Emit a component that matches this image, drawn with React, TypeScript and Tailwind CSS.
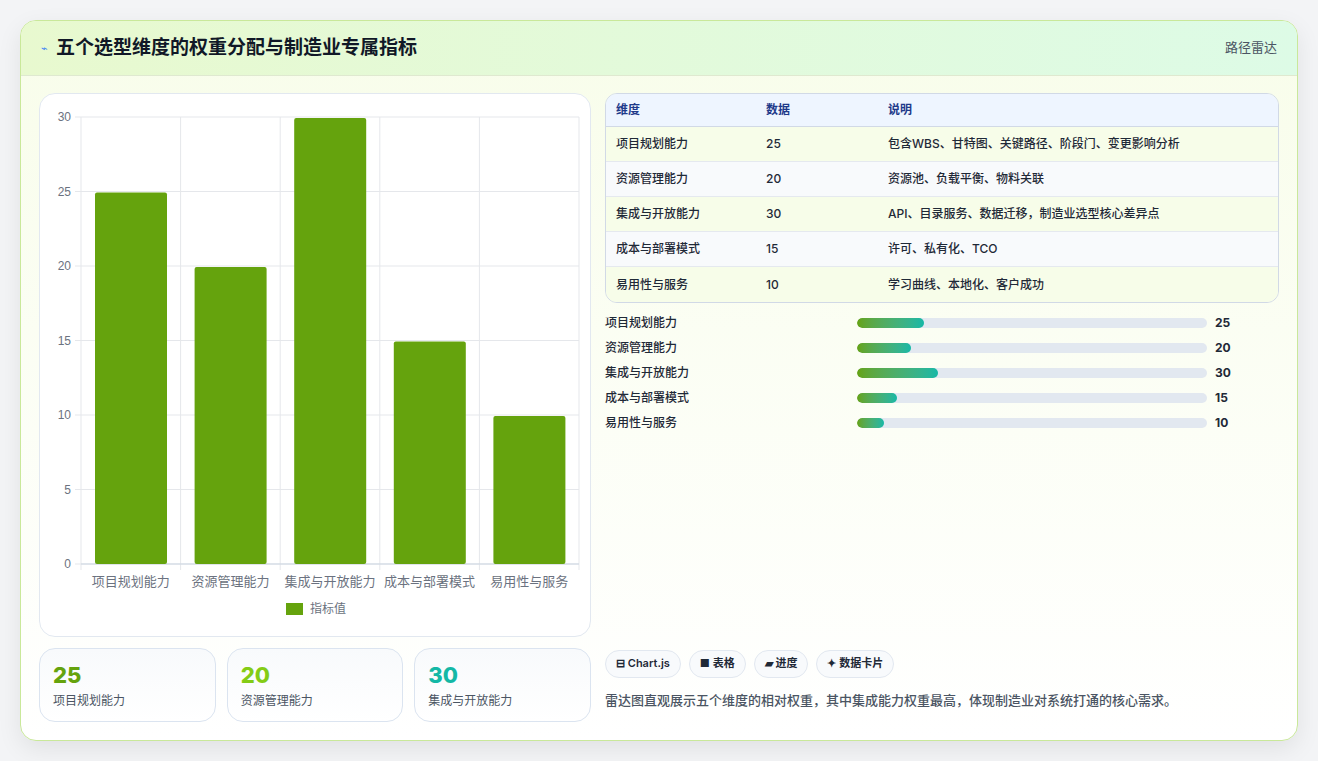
import React from "react";

const data = [
  { name: "项目规划能力", v: 25, d: "包含WBS、甘特图、关键路径、阶段门、变更影响分析" },
  { name: "资源管理能力", v: 20, d: "资源池、负载平衡、物料关联" },
  { name: "集成与开放能力", v: 30, d: "API、目录服务、数据迁移，制造业选型核心差异点" },
  { name: "成本与部署模式", v: 15, d: "许可、私有化、TCO" },
  { name: "易用性与服务", v: 10, d: "学习曲线、本地化、客户成功" },
];

function Chart() {
  // svg coords relative to card at (39,92)
  const x0 = 41, x1 = 539, yTop = 23, yBot = 470;
  const cw = (x1 - x0) / 5;
  const y = (v: number) => yBot - (v / 30) * (yBot - yTop);
  return (
    <svg width="550" height="542" className="block">
      {[0, 5, 10, 15, 20, 25, 30].map((t) => (
        <g key={t}>
          <line x1={x0 - 6} x2={x1} y1={y(t)} y2={y(t)} stroke="#e5e7eb" strokeWidth="1" />
          <text x={x0 - 10} y={y(t) + 4} textAnchor="end" fontSize="12" fill="#6b7280" fontFamily="Liberation Sans, sans-serif">{t}</text>
        </g>
      ))}
      {[0, 1, 2, 3, 4, 5].map((i) => (
        <line key={i} x1={x0 + i * cw} x2={x0 + i * cw} y1={yTop} y2={yBot + 6} stroke="#e5e7eb" />
      ))}
      <line x1={x0} x2={x1} y1={yBot} y2={yBot} stroke="#cbd5e1" />
      {data.map((d, i) => (
        <g key={d.name}>
          <rect x={x0 + i * cw + 14} y={y(d.v) + 1} width={72} height={yBot - y(d.v) - 1} rx="2" fill="#65a30d" />
          <text x={x0 + i * cw + cw / 2} y={yBot + 22} textAnchor="middle" fontSize="13" fill="#6b7280" fontFamily="Noto Sans CJK SC, sans-serif">{d.name}</text>
        </g>
      ))}
      <rect x="246" y="509" width="17" height="12" fill="#65a30d" />
      <text x="270" y="519" fontSize="12" fill="#6b7280" fontFamily="Noto Sans CJK SC, sans-serif">指标值</text>
    </svg>
  );
}

export default function App() {
  return (
    <div className="min-h-[761px] bg-[#f3f4f6] pt-5 px-5 pb-[22px]" style={{ fontFamily: "Inter, 'Noto Sans CJK SC', sans-serif" }}>
      <div className="rounded-2xl border border-[#c9e89a] bg-gradient-to-b from-[#f8fdea] to-white shadow-[0_8px_24px_rgba(0,0,0,0.08)] overflow-hidden">
        <div className="h-[55px] flex items-center justify-between px-5 bg-gradient-to-r from-[#e8f9cf] to-[#ddfbe6] border-b border-[#dfe9d0]">
          <div className="flex items-center gap-2">
            <span className="text-[11px] text-[#3b82f6]">⌁</span>
            <span className="text-[19px] font-bold text-[#111827]">五个选型维度的权重分配与制造业专属指标</span>
          </div>
          <span className="text-[13px] text-[#4b5563]">路径雷达</span>
        </div>
        <div className="flex gap-[14px] px-[18px] pt-[17px] pb-[18px]">
          <div className="w-[552px] flex flex-col gap-[11px]">
            <div className="h-[544px] rounded-2xl border border-[#e2e8f0] bg-white overflow-hidden">
              <Chart />
            </div>
            <div className="grid grid-cols-3 gap-[11px]">
              {data.slice(0, 3).map((d, i) => (
                <div key={d.name} className="h-[74px] rounded-2xl border border-[#dbe4f0] bg-gradient-to-b from-[#f8fafc] to-white px-[13px] pt-[12px]">
                  <div className={`text-[22px] font-extrabold leading-7 ${i === 0 ? "text-[#65a30d]" : i === 1 ? "text-[#84cc16]" : "text-[#14b8a6]"}`}>{d.v}</div>
                  <div className="text-[12px] text-[#4b5563] mt-[3px]">{d.name}</div>
                </div>
              ))}
            </div>
          </div>
          <div className="flex-1 flex flex-col">
            <div className="rounded-xl border border-[#d1d9e6] overflow-hidden text-[12px]">
              <div className="flex h-[33px] items-center bg-[#eef5ff] border-b border-[#d1d9e6] text-[#1e3a8a] font-semibold">
                <div className="w-[160px] pl-[10px]">维度</div>
                <div className="w-[122px]">数据</div>
                <div>说明</div>
              </div>
              {data.map((d, i) => (
                <div key={d.name} className={`flex h-[35px] items-center text-[#1f2937] ${i < 4 ? "border-b border-[#e5e9ef]" : ""} ${i % 2 ? "bg-[#f8fafc]" : "bg-[#f7fde9]"}`}>
                  <div className="w-[160px] pl-[10px] font-medium">{d.name}</div>
                  <div className="w-[122px] font-medium">{d.v}</div>
                  <div className="font-medium">{d.d}</div>
                </div>
              ))}
            </div>
            <div className="flex flex-col gap-[12px] mt-[13px]">
              {data.map((d) => (
                <div key={d.name} className="flex items-center h-[13px] text-[12px]">
                  <div className="w-[252px] text-[#1f2937] font-medium">{d.name}</div>
                  <div className="w-[350px] h-[10px] rounded-full bg-[#e2e8f0] overflow-hidden">
                    <div className="h-full rounded-full bg-gradient-to-r from-[#65a30d] to-[#14b8a6]" style={{ width: `${d.v * 0.77}%` }} />
                  </div>
                  <div className="ml-2 font-bold text-[#1f2937]">{d.v}</div>
                </div>
              ))}
            </div>
            <div className="flex-1" />
            <div className="flex gap-2 text-[11px] font-semibold text-[#1f2937]">
              {["⊟ Chart.js", "■ 表格", "▰ 进度", "✦ 数据卡片"].map((t) => (
                <span key={t} className="h-[28px] px-[10px] flex items-center rounded-full border border-[#e2e8f0] bg-[#f8fafc]">{t}</span>
              ))}
            </div>
            <div className="mt-[13px] mb-[12px] text-[13px] text-[#4b5563] font-medium">雷达图直观展示五个维度的相对权重，其中集成能力权重最高，体现制造业对系统打通的核心需求。</div>
          </div>
        </div>
      </div>
    </div>
  );
}
